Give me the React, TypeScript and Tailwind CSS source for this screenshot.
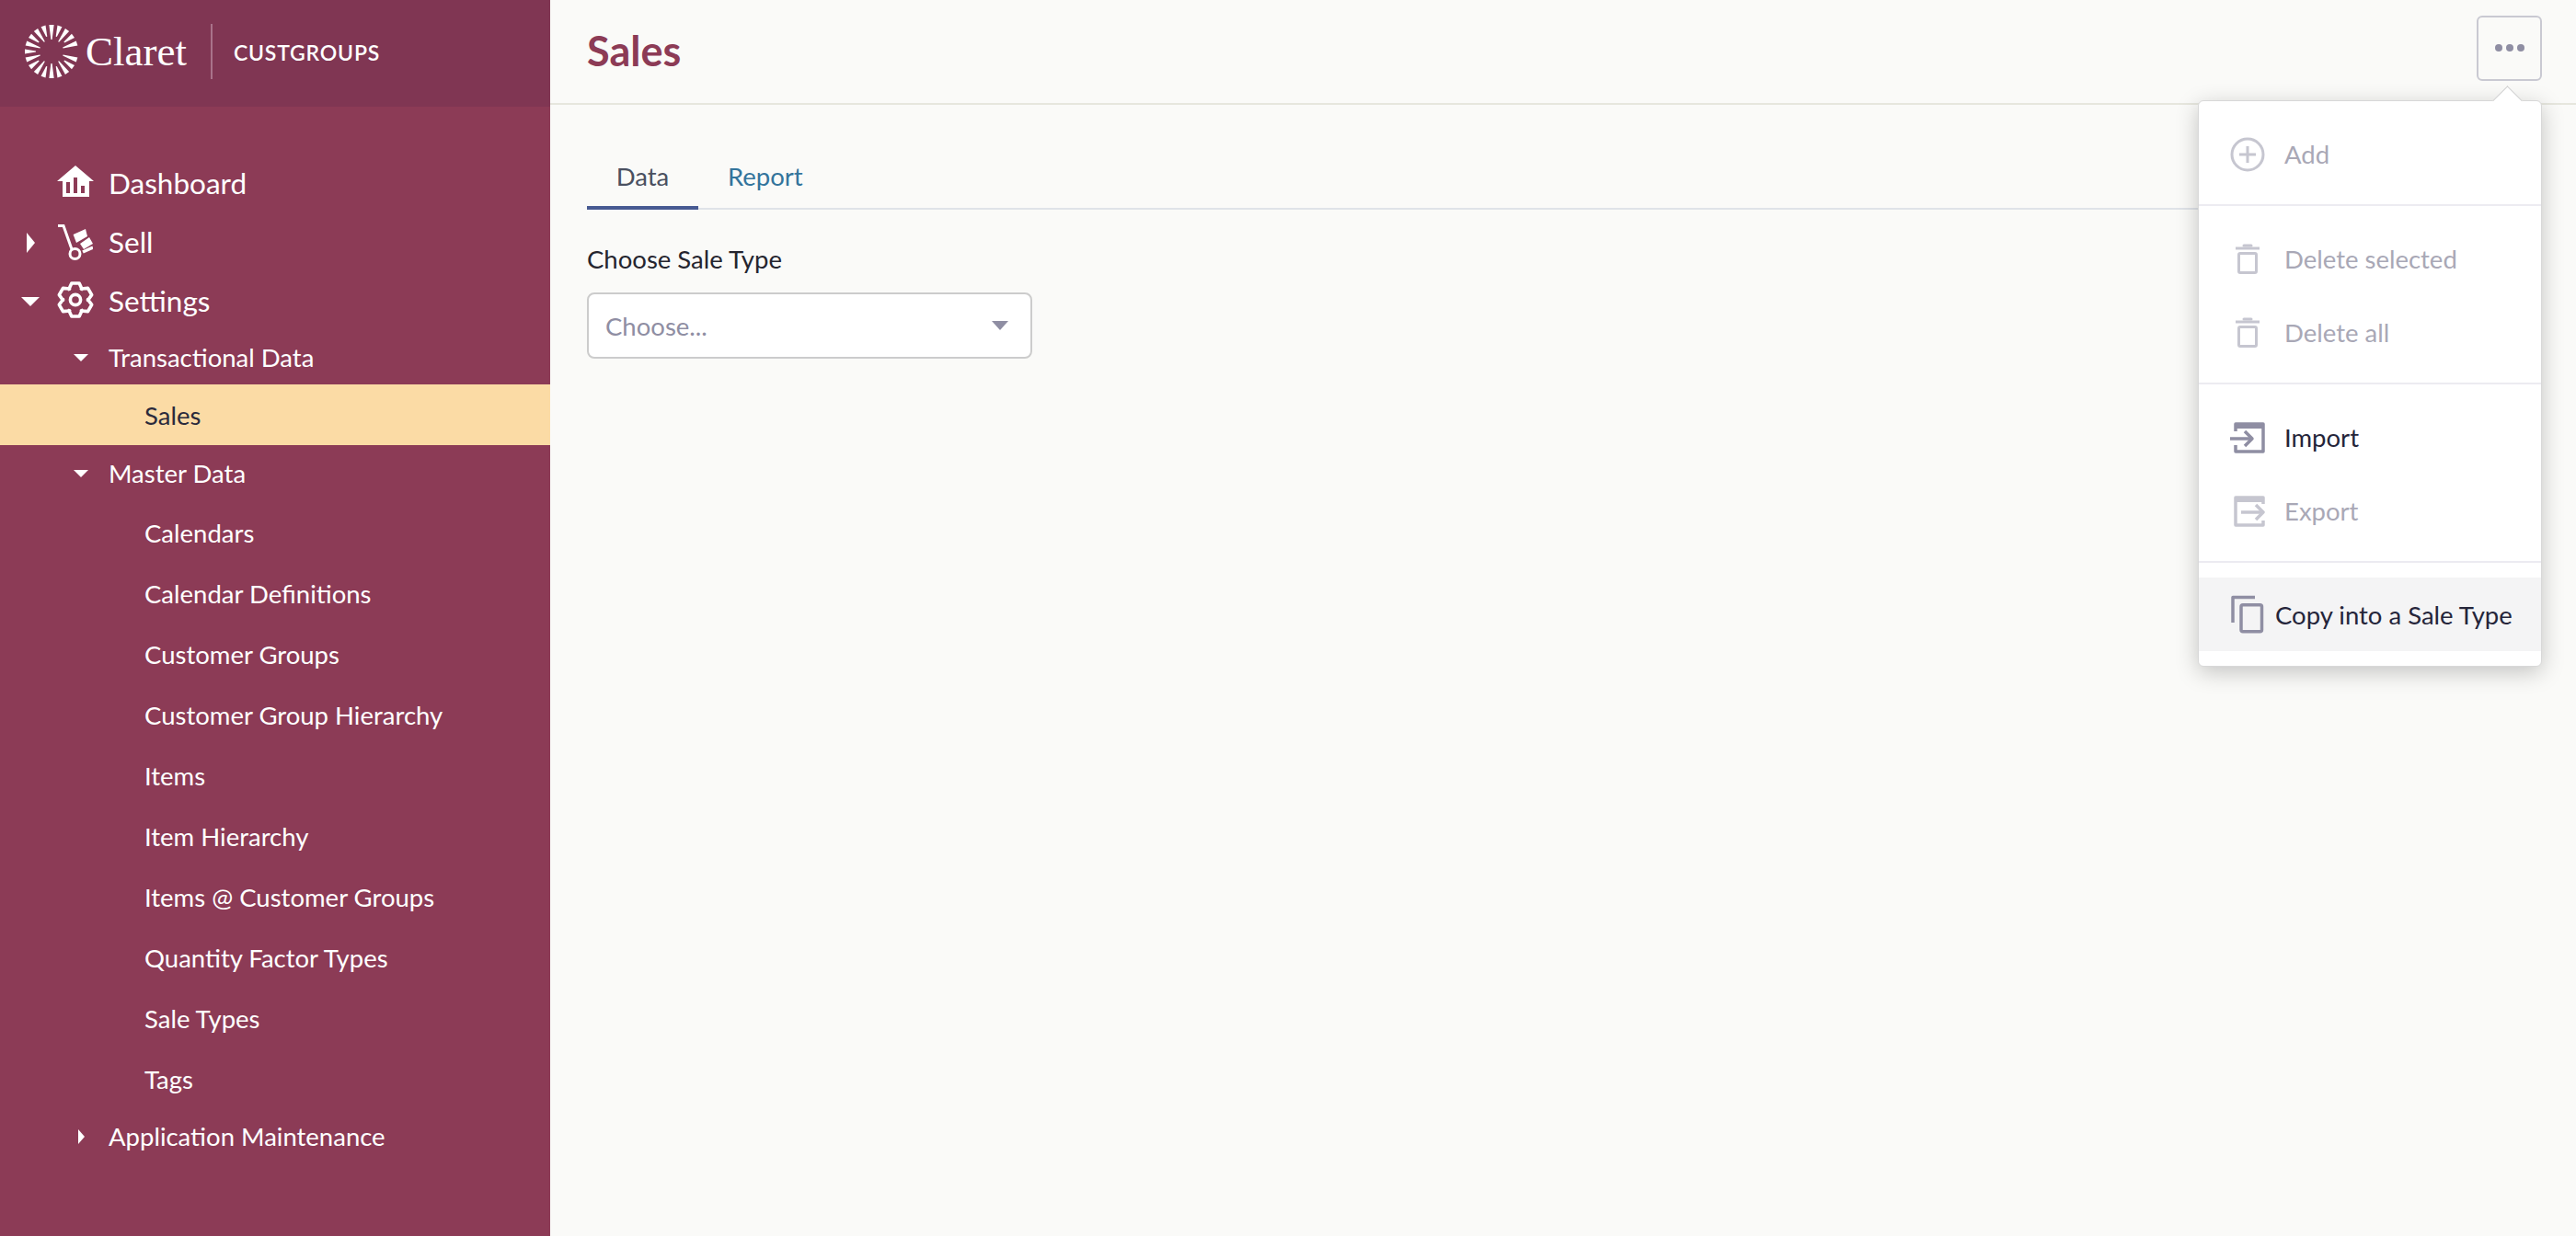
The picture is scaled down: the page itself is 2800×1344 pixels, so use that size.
import React from "react";

const spokes = Array.from({ length: 20 }, (_, i) => i).filter((i) => i !== 5);

function Sunburst() {
  return (
    <svg width="60" height="60" viewBox="-30 -30 60 60" fill="#fff">
      {spokes.map((i) => {
        const r1 = i % 2 === 0 ? 13 : 17;
        return <polygon key={i} points={`-0.6,-${r1} 0.6,-${r1} 2.6,-29 -2.6,-29`} transform={`rotate(${i * 18})`} />;
      })}
    </svg>
  );
}

function House() {
  return (
    <svg width="40" height="34" viewBox="0 0 40 34" fill="#fff" className="mb-[6px]">
      <path fillRule="evenodd" d="M20 0 L40 17 L35 17 L35 34 L6 34 L6 17 L0 17 Z M10 18 V30 H14 V18 Z M18 13 V30 H22 V13 Z M26 22 V30 H30 V22 Z" />
    </svg>
  );
}

function Cart() {
  return (
    <svg width="38" height="40" viewBox="0 0 38 40" fill="none" stroke="#fff" strokeWidth="3">
      <path d="M0 1.5 H6 L15 27" />
      <circle cx="18.5" cy="32" r="5.5" />
      <path d="M27 30 L38 25" strokeWidth="3.5" />
      <path fill="#fff" stroke="none" d="M16.6 11 L30 5 L32 13 L20 20 Z M24 21 L34 14 L38 21 L28 27 Z" />
    </svg>
  );
}

const gearPoints = (() => {
  const pts: string[] = [];
  for (let i = 0; i < 6; i++) {
    const a = (i * 60 - 90) * (Math.PI / 180);
    const step = Math.PI / 180;
    const add = (r: number, d: number) => pts.push(`${(20 + r * Math.cos(a + d * step)).toFixed(2)},${(20 + r * Math.sin(a + d * step)).toFixed(2)}`);
    add(13.5, -32);
    add(18.5, -13);
    add(18.5, 13);
    add(13.5, 32);
  }
  return pts.join(" ");
})();

function Gear() {
  return (
    <svg width="40" height="40" viewBox="0 0 40 40" fill="none" stroke="#fff" strokeWidth="3.6" strokeLinejoin="round" className="mb-1">
      <polygon points={gearPoints} />
      <circle cx="20" cy="20" r="5.6" />
    </svg>
  );
}

function Tri({ dir, size = "lg" }: { dir: "down" | "right"; size?: "lg" | "sm" }) {
  if (dir === "down")
    return size === "lg" ? (
      <span className="block w-0 h-0 border-x-[10px] border-x-transparent border-t-[10px] border-t-white" />
    ) : (
      <span className="block w-0 h-0 border-x-[8px] border-x-transparent border-t-[8px] border-t-white" />
    );
  return size === "lg" ? (
    <span className="block w-0 h-0 border-y-[11px] border-y-transparent border-l-[9px] border-l-white" />
  ) : (
    <span className="block w-0 h-0 border-y-[8px] border-y-transparent border-l-[7px] border-l-white" />
  );
}

function TopItem({ label, icon, tri }: { label: string; icon: React.ReactNode; tri?: React.ReactNode }) {
  return (
    <div className="h-16 flex items-center text-white text-[31.5px]">
      <div className="w-[62px] flex justify-center pl-1">{tri}</div>
      <div className="w-[40px] flex justify-center">{icon}</div>
      <span className="ml-4">{label}</span>
    </div>
  );
}

function SubHead({ label, tri, h }: { label: string; tri: React.ReactNode; h: string }) {
  return (
    <div className={`${h} flex items-center text-white text-[27.5px]`}>
      <div className="w-[118px] pl-[72px]">
        <div className="w-8 flex justify-center">{tri}</div>
      </div>
      <span>{label}</span>
    </div>
  );
}

function Leaf({ label, active }: { label: string; active?: boolean }) {
  return (
    <div className={`h-[66px] pl-[157px] pt-[1px] flex items-center text-[27.5px] ${active ? "bg-[#fbdba5] text-[#2a2a3c]" : "text-white"}`}>
      {label}
    </div>
  );
}

function Trash() {
  return (
    <svg width="28" height="34" viewBox="0 0 28 34" fill="none" stroke="#c6c6d0" strokeWidth="3">
      <path d="M1 5 H27" />
      <path d="M10 2 H18" strokeLinecap="round" />
      <rect x="4.5" y="10.5" width="19" height="21" rx="1.5" />
    </svg>
  );
}

function MenuItem({ icon, label, disabled, hover, tight }: { icon: React.ReactNode; label: string; disabled?: boolean; hover?: boolean; tight?: boolean }) {
  return (
    <div className={`h-20 flex items-center pl-[34px] text-[27.5px] ${hover ? "bg-[#f4f4f5]" : ""} ${disabled ? "text-[#a9a8b6]" : "text-[#25253a]"}`}>
      <div className={`${tight ? "w-[49px]" : "w-[59px]"} flex items-center`}>{icon}</div>
      <span className={hover ? "pt-[2px]" : ""}>{label}</span>
    </div>
  );
}

export default function App() {
  return (
    <div className="w-[2800px] h-[1344px] flex overflow-hidden bg-[#fafaf8] font-['Lato',sans-serif]">
      <aside className="w-[598px] shrink-0 bg-[#8c3b56] flex flex-col">
        <div className="h-[116px] bg-[#803653] flex items-start pt-[26px] pl-[26px]">
          <Sunburst />
          <span className="ml-[7px] text-[45px] leading-[60px] text-white font-['Liberation_Serif',serif]">Claret</span>
          <div className="ml-[26px] w-[2px] h-[60px] bg-[#a9738a]" />
          <span className="ml-[23px] mt-[16px] text-[23px] leading-[30px] font-semibold tracking-[0.8px] text-white">CUSTGROUPS</span>
        </div>
        <div className="pt-[52px]">
          <TopItem label="Dashboard" icon={<House />} />
          <TopItem label="Sell" icon={<Cart />} tri={<Tri dir="right" />} />
          <TopItem label="Settings" icon={<Gear />} tri={<Tri dir="down" />} />
          <SubHead h="h-[58px]" label="Transactional Data" tri={<Tri dir="down" size="sm" />} />
          <Leaf label="Sales" active />
          <SubHead h="h-[62px]" label="Master Data" tri={<Tri dir="down" size="sm" />} />
          {["Calendars", "Calendar Definitions", "Customer Groups", "Customer Group Hierarchy", "Items", "Item Hierarchy", "Items @ Customer Groups", "Quantity Factor Types", "Sale Types", "Tags"].map((l) => (
            <Leaf key={l} label={l} />
          ))}
          <SubHead h="h-[60px]" label="Application Maintenance" tri={<Tri dir="right" size="sm" />} />
        </div>
      </aside>
      <main className="flex-1 flex flex-col relative">
        <header className="h-[114px] shrink-0 border-b-2 border-[#e6e6de] flex items-center justify-between pl-10 pr-[37px]">
          <h1 className="text-[45px] font-bold text-[#8c3b56]">Sales</h1>
          <button className="w-[71px] h-[71px] mb-[8px] rounded-md border-2 border-[#c9c9d2] flex items-center justify-center gap-[4px]">
            <span className="w-2 h-2 rounded-full bg-[#8f8ea3]" />
            <span className="w-2 h-2 rounded-full bg-[#8f8ea3]" />
            <span className="w-2 h-2 rounded-full bg-[#8f8ea3]" />
          </button>
        </header>
        <div className="px-10 pt-[48px]">
          <div className="flex h-[66px] border-b-2 border-[#dfe3e8] text-[27.5px]">
            <div className="w-[121px] h-[66px] border-b-4 border-[#475a92] text-center text-[#4a5060] leading-[60px]">Data</div>
            <div className="ml-[32px] text-[#33749c] leading-[60px]">Report</div>
          </div>
          <label className="block mt-[34px] mb-[16px] text-[27.5px] leading-[40px] text-[#25252f]">Choose Sale Type</label>
          <div className="w-[484px] h-[72px] rounded-lg border-2 border-[#cccccc] bg-white flex items-center justify-between pl-[18px] pr-[24px] text-[27.5px] text-[#8f8ea3]">
            <span className="pt-[2px]">Choose...</span>
            <span className="block w-0 h-0 border-x-[9px] border-x-transparent border-t-[10px] border-t-[#8f8ea3]" />
          </div>
        </div>

        <div className="absolute left-[1791px] top-[109px] w-[374px] h-[616px] bg-white rounded-md border border-[#d8d8d8] shadow-[0_6px_24px_rgba(0,0,0,0.22)]">
          <div className="absolute right-[25px] top-[-12px] w-[23px] h-[23px] rotate-45 bg-white border-l border-t border-[#d0d0d0]" />
          <div className="relative pt-[18px] pb-[14px] border-b-2 border-[#ecebf1]">
            <MenuItem disabled label="Add" icon={
              <svg width="38" height="38" viewBox="0 0 38 38" fill="none" stroke="#c6c6d0" strokeWidth="3">
                <circle cx="19" cy="19" r="17" />
                <path d="M19 10 V28 M10 19 H28" />
              </svg>
            } />
          </div>
          <div className="pt-[18px] pb-[14px] border-b-2 border-[#ecebf1]">
            <MenuItem disabled label="Delete selected" icon={<span className="pl-[5px]"><Trash /></span>} />
            <MenuItem disabled label="Delete all" icon={<span className="pl-[5px]"><Trash /></span>} />
          </div>
          <div className="pt-[18px] pb-[14px] border-b-2 border-[#ecebf1]">
            <MenuItem label="Import" icon={
              <svg width="38" height="34" viewBox="0 0 38 34" fill="none" stroke="#8f8ea3" strokeWidth="3.5" strokeLinejoin="round">
                <path d="M6 10 V2 H36 V32 H6 V25" />
                <path d="M6 4 H36" strokeWidth="6" />
                <path d="M0 18 H23" />
                <path d="M16 10 L24 18 L16 26" />
              </svg>
            } />
            <MenuItem disabled label="Export" icon={
              <svg width="38" height="34" viewBox="0 0 38 34" fill="none" stroke="#c6c6d0" strokeWidth="3.5" strokeLinejoin="round">
                <path d="M36 9 V2 H6 V32 H36 V27" />
                <path d="M6 4 H36" strokeWidth="6" />
                <path d="M12 18 H35" />
                <path d="M28 10 L36 18 L28 26" />
              </svg>
            } />
          </div>
          <div className="py-4">
            <MenuItem hover tight label="Copy into a Sale Type" icon={
              <svg width="37" height="42" viewBox="0 0 37 42" fill="none" stroke="#8f8ea3" strokeWidth="3.5" strokeLinejoin="round">
                <path d="M3 30 V2.5 H27" />
                <rect x="12" y="10.75" width="22.5" height="29" rx="2" />
              </svg>
            } />
          </div>
        </div>
      </main>
    </div>
  );
}
